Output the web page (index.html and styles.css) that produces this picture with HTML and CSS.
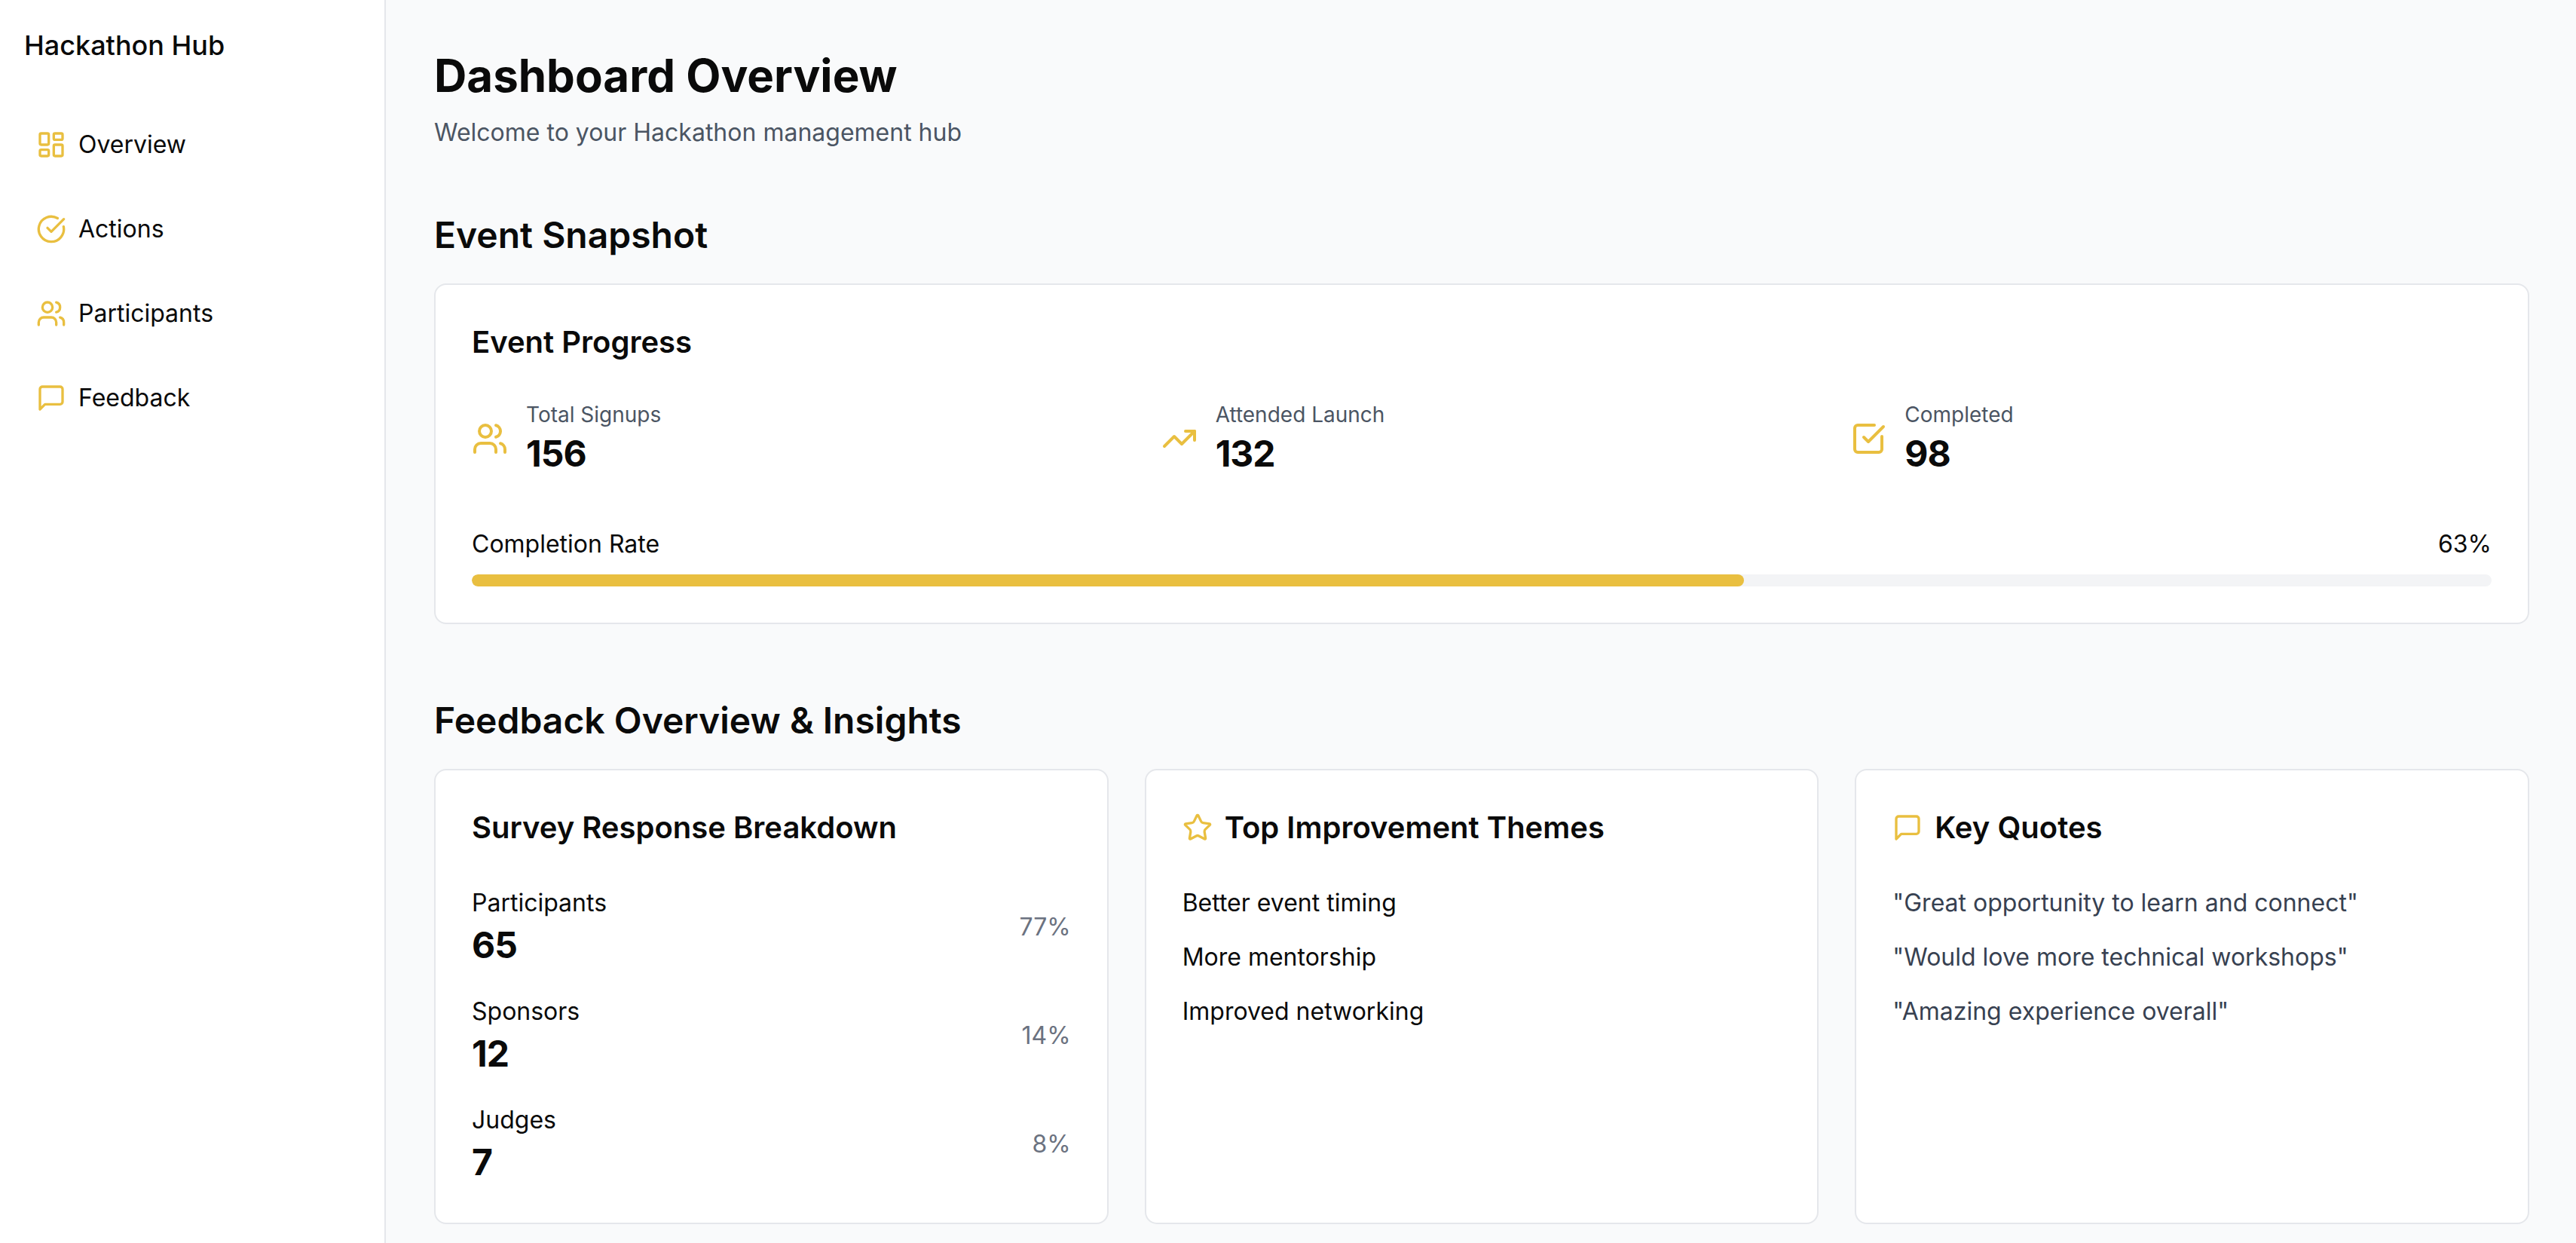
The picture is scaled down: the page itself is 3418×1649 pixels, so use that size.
FILE: index.html
```html
<!DOCTYPE html>
<html lang="en">
<head>
    <meta charset="UTF-8">
    <meta name="viewport" content="width=device-width, initial-scale=1.0">
    <title>Hackathon Hub</title>
    <link rel="stylesheet" href="styles.css">
</head>
<body>
    <aside class="sidebar">
        <div class="brand">Hackathon Hub</div>
        <nav class="nav">
            <a class="nav-item" href="#">
                <svg class="icon" viewBox="0 0 24 24"><rect width="7" height="9" x="3" y="3" rx="1"/><rect width="7" height="5" x="14" y="3" rx="1"/><rect width="7" height="9" x="14" y="12" rx="1"/><rect width="7" height="5" x="3" y="16" rx="1"/></svg>
                Overview
            </a>
            <a class="nav-item" href="#">
                <svg class="icon" viewBox="0 0 24 24"><path d="M21.801 10A10 10 0 1 1 17 3.335"/><path d="m9 11 3 3L22 4"/></svg>
                Actions
            </a>
            <a class="nav-item" href="#">
                <svg class="icon" viewBox="0 0 24 24"><path d="M16 21v-2a4 4 0 0 0-4-4H6a4 4 0 0 0-4 4v2"/><circle cx="9" cy="7" r="4"/><path d="M22 21v-2a4 4 0 0 0-3-3.87"/><path d="M16 3.13a4 4 0 0 1 0 7.75"/></svg>
                Participants
            </a>
            <a class="nav-item" href="#">
                <svg class="icon" viewBox="0 0 24 24"><path d="M21 15a2 2 0 0 1-2 2H7l-4 4V5a2 2 0 0 1 2-2h14a2 2 0 0 1 2 2z"/></svg>
                Feedback
            </a>
        </nav>
    </aside>

    <main class="main">
        <h1 class="page-title">Dashboard Overview</h1>
        <p class="page-sub">Welcome to your Hackathon management hub</p>

        <h2 class="section-title">Event Snapshot</h2>
        <section class="card progress-card">
            <h3 class="card-title">Event Progress</h3>
            <div class="stats">
                <div class="stat">
                    <svg class="icon icon-lg" viewBox="0 0 24 24"><path d="M16 21v-2a4 4 0 0 0-4-4H6a4 4 0 0 0-4 4v2"/><circle cx="9" cy="7" r="4"/><path d="M22 21v-2a4 4 0 0 0-3-3.87"/><path d="M16 3.13a4 4 0 0 1 0 7.75"/></svg>
                    <div>
                        <div class="stat-label">Total Signups</div>
                        <div class="stat-value">156</div>
                    </div>
                </div>
                <div class="stat">
                    <svg class="icon icon-lg" viewBox="0 0 24 24"><polyline points="22 7 13.5 15.5 8.5 10.5 2 17"/><polyline points="16 7 22 7 22 13"/></svg>
                    <div>
                        <div class="stat-label">Attended Launch</div>
                        <div class="stat-value">132</div>
                    </div>
                </div>
                <div class="stat">
                    <svg class="icon icon-lg" viewBox="0 0 24 24"><path d="M21 10.5V19a2 2 0 0 1-2 2H5a2 2 0 0 1-2-2V5a2 2 0 0 1 2-2h11"/><path d="m9 11 3 3L22 4"/></svg>
                    <div>
                        <div class="stat-label">Completed</div>
                        <div class="stat-value">98</div>
                    </div>
                </div>
            </div>
            <div class="rate-row">
                <span>Completion Rate</span>
                <span>63%</span>
            </div>
            <div class="bar"><div class="bar-fill" style="width: 63%"></div></div>
        </section>

        <h2 class="section-title section-gap">Feedback Overview &amp; Insights</h2>
        <div class="columns">
            <section class="card">
                <h3 class="card-title">Survey Response Breakdown</h3>
                <div class="breakdown">
                    <div class="breakdown-row">
                        <div>
                            <div class="breakdown-label">Participants</div>
                            <div class="stat-value">65</div>
                        </div>
                        <span class="percent">77%</span>
                    </div>
                    <div class="breakdown-row">
                        <div>
                            <div class="breakdown-label">Sponsors</div>
                            <div class="stat-value">12</div>
                        </div>
                        <span class="percent">14%</span>
                    </div>
                    <div class="breakdown-row">
                        <div>
                            <div class="breakdown-label">Judges</div>
                            <div class="stat-value">7</div>
                        </div>
                        <span class="percent">8%</span>
                    </div>
                </div>
            </section>
            <section class="card">
                <h3 class="card-title with-icon">
                    <svg class="icon" viewBox="0 0 24 24"><path d="M11.525 2.295a.53.53 0 0 1 .95 0l2.31 4.679a2.123 2.123 0 0 0 1.595 1.16l5.166.756a.53.53 0 0 1 .294.904l-3.736 3.638a2.123 2.123 0 0 0-.611 1.878l.882 5.14a.53.53 0 0 1-.771.56l-4.618-2.428a2.122 2.122 0 0 0-1.973 0L6.396 21.01a.53.53 0 0 1-.77-.56l.881-5.139a2.122 2.122 0 0 0-.611-1.879L2.16 9.795a.53.53 0 0 1 .294-.906l5.165-.755a2.122 2.122 0 0 0 1.597-1.16z"/></svg>
                    Top Improvement Themes
                </h3>
                <ul class="list">
                    <li>Better event timing</li>
                    <li>More mentorship</li>
                    <li>Improved networking</li>
                </ul>
            </section>
            <section class="card">
                <h3 class="card-title with-icon">
                    <svg class="icon" viewBox="0 0 24 24"><path d="M21 15a2 2 0 0 1-2 2H7l-4 4V5a2 2 0 0 1 2-2h14a2 2 0 0 1 2 2z"/></svg>
                    Key Quotes
                </h3>
                <ul class="list quotes">
                    <li>"Great opportunity to learn and connect"</li>
                    <li>"Would love more technical workshops"</li>
                    <li>"Amazing experience overall"</li>
                </ul>
            </section>
        </div>
    </main>
</body>
</html>
```

FILE: styles.css
```css
* {
    box-sizing: border-box;
}
html, body {
    height: 100%;
    margin: 0;
}
body {
    display: flex;
    overflow: hidden;
    font-family: Inter, "Noto Sans", sans-serif;
    font-size: 32px;
    line-height: 48px;
    color: #0a0a0a;
    background-color: #f9fafb;
}
.sidebar {
    flex: 0 0 512px;
    padding: 32px;
    background-color: #fff;
    border-right: 2px solid #e5e7eb;
}
.brand {
    font-size: 36px;
    font-weight: 500;
    line-height: 56px;
    margin-bottom: 56px;
}
.nav {
    display: flex;
    flex-direction: column;
    gap: 16px;
}
.nav-item {
    display: flex;
    align-items: center;
    gap: 16px;
    padding: 24px 16px;
    color: #0a0a0a;
    text-decoration: none;
}
.icon {
    flex: none;
    width: 40px;
    height: 40px;
    fill: none;
    stroke: #e9bf40;
    stroke-width: 2;
    stroke-linecap: round;
    stroke-linejoin: round;
}
.icon-lg {
    width: 48px;
    height: 48px;
}
.main {
    flex: 1;
    min-width: 0;
    padding: 64px 62px 64px 64px;
}
.page-title {
    margin: 0 0 16px;
    font-size: 60px;
    font-weight: 700;
    line-height: 72px;
}
.page-sub {
    margin: 0 0 80px;
    font-size: 32px;
    line-height: 48px;
    color: #4b5563;
}
.section-title {
    margin: 0 0 32px;
    font-size: 48px;
    font-weight: 600;
    line-height: 64px;
}
.section-gap {
    margin-top: 96px;
}
.card {
    padding: 48px;
    background-color: #fff;
    border: 2px solid #e5e7eb;
    border-radius: 16px;
}
.card-title {
    margin: 0 0 48px;
    font-size: 40px;
    font-weight: 600;
    line-height: 56px;
}
.with-icon {
    display: flex;
    align-items: center;
    gap: 16px;
}
.stats {
    display: grid;
    grid-template-columns: repeat(3, 1fr);
    gap: 64px;
    margin-bottom: 64px;
}
.stat {
    display: flex;
    align-items: center;
    gap: 24px;
}
.stat-label {
    font-size: 28px;
    line-height: 40px;
    color: #4b5563;
}
.stat-value {
    font-size: 48px;
    font-weight: 700;
    line-height: 64px;
    letter-spacing: -1px;
}
.rate-row {
    display: flex;
    justify-content: space-between;
    margin-bottom: 16px;
}
.bar {
    height: 16px;
    background-color: #f3f4f6;
    border-radius: 8px;
    overflow: hidden;
}
.bar-fill {
    height: 100%;
    background-color: #e9bf40;
    border-radius: 8px;
}
.columns {
    display: grid;
    grid-template-columns: repeat(3, 1fr);
    gap: 48px;
}
.breakdown {
    display: flex;
    flex-direction: column;
    gap: 32px;
}
.breakdown-row {
    display: flex;
    justify-content: space-between;
    align-items: center;
}
.percent {
    color: #6b7280;
}
.list {
    display: flex;
    flex-direction: column;
    gap: 24px;
    margin: 0;
    padding: 0;
    list-style: none;
}
.quotes {
    color: #374151;
}
```
